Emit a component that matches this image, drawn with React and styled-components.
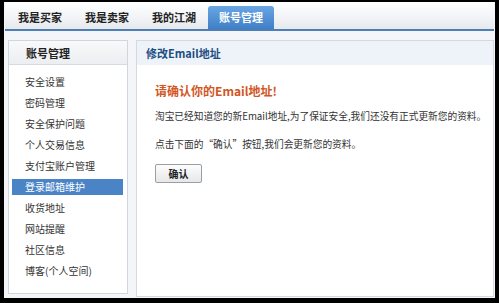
import styled, { createGlobalStyle } from "styled-components";

const GlobalStyle = createGlobalStyle`
  html, body {
    margin: 0;
    padding: 0;
    background: #000;
  }
  * {
    box-sizing: border-box;
  }
`;

const font = `"Noto Sans CJK SC", "Liberation Sans", sans-serif`;

const Frame = styled.div`
  width: 499px;
  height: 303px;
  padding: 2px 4px 5px 4px;
  background: #000;
`;

const Page = styled.div`
  width: 100%;
  height: 100%;
  background: #f3f5f8;
  font-family: ${font};
  display: flex;
  flex-direction: column;
`;

const TabBar = styled.div`
  height: 29px;
  display: flex;
  align-items: flex-end;
  gap: 1px;
  padding: 0 1px 0 2px;
  background: linear-gradient(180deg, #ffffff 0%, #f1f3f6 60%, #e6e9ed 100%);
  border-bottom: 2px solid #4e7fb4;
  margin: 0 1px;
`;

const Tab = styled.div`
  width: 66px;
  height: 23px;
  display: flex;
  align-items: center;
  justify-content: center;
  font-size: 11px;
  font-weight: 700;
  color: ${(p) => (p.active ? "#fff" : "#222")};
  border-radius: 3px 3px 0 0;
  background: ${(p) =>
    p.active ? "linear-gradient(180deg, #6aa6e4 0%, #3f7fc6 100%)" : "transparent"};
  padding-bottom: 1px;
`;

const Content = styled.div`
  flex: 1;
  display: flex;
  gap: 8px;
  padding: 9px 1px 0 4px;
`;

const Side = styled.div`
  flex: 0 0 120px;
  height: 254px;
  background: #fff;
  border: 1px solid #cfd6de;
  display: flex;
  flex-direction: column;
`;

const SideHead = styled.div`
  height: 24px;
  padding-left: 17px;
  display: flex;
  align-items: center;
  font-size: 11px;
  font-weight: 700;
  color: #222;
  background: linear-gradient(180deg, #f8f9fa 0%, #eceef1 100%);
  border-bottom: 1px solid #d6dbe1;
`;

const SideList = styled.div`
  padding: 9px 4px 0 3px;
  display: flex;
  flex-direction: column;
  gap: 5px;
`;

const SideItem = styled.div`
  height: 16px;
  line-height: 16px;
  padding-left: 13px;
  font-size: 10px;
  color: ${(p) => (p.active ? "#fff" : "#333")};
  background: ${(p) => (p.active ? "#4a84c7" : "transparent")};
  white-space: nowrap;
`;

const Main = styled.div`
  flex: 1;
  min-width: 0;
  height: 257px;
  background: #fff;
  border: 1px solid #d3dae2;
  display: flex;
  flex-direction: column;
`;

const MainHead = styled.div`
  height: 24px;
  padding-left: 9px;
  display: flex;
  align-items: center;
  font-size: 11px;
  font-weight: 700;
  color: #1c4f80;
  background: #eef3fa;
`;

const MainBody = styled.div`
  padding: 18px 0 0 18px;
  display: flex;
  flex-direction: column;
  align-items: flex-start;
`;

const Title = styled.div`
  font-size: 12px;
  line-height: 16px;
  font-weight: 700;
  color: #d1561f;
`;

const Para = styled.div`
  font-size: 9.7px;
  line-height: 16px;
  color: #333;
  white-space: nowrap;
  margin-top: ${(p) => p.gap}px;
`;

const Button = styled.button`
  margin-top: 12px;
  width: 47px;
  height: 19px;
  padding: 0;
  font-family: ${font};
  font-size: 10px;
  font-weight: 700;
  color: #222;
  border: 1px solid #9a9fa6;
  border-radius: 2px;
  background: linear-gradient(180deg, #fdfdfd 0%, #e6e7e9 100%);
`;

const tabs = ["我是买家", "我是卖家", "我的江湖", "账号管理"];
const menu = [
  "安全设置",
  "密码管理",
  "安全保护问题",
  "个人交易信息",
  "支付宝账户管理",
  "登录邮箱维护",
  "收货地址",
  "网站提醒",
  "社区信息",
  "博客(个人空间)",
];

export default function App() {
  return (
    <>
      <GlobalStyle />
      <Frame>
        <Page>
          <TabBar>
            {tabs.map((t) => (
              <Tab key={t} active={t === "账号管理"}>
                {t}
              </Tab>
            ))}
          </TabBar>
          <Content>
            <Side>
              <SideHead>账号管理</SideHead>
              <SideList>
                {menu.map((m) => (
                  <SideItem key={m} active={m === "登录邮箱维护"}>
                    {m}
                  </SideItem>
                ))}
              </SideList>
            </Side>
            <Main>
              <MainHead>修改Email地址</MainHead>
              <MainBody>
                <Title>请确认你的Email地址!</Title>
                <Para gap={9}>
                  淘宝已经知道您的新Email地址,为了保证安全,我们还没有正式更新您的资料。
                </Para>
                <Para gap={12}>点击下面的“确认”按钮,我们会更新您的资料。</Para>
                <Button>确认</Button>
              </MainBody>
            </Main>
          </Content>
        </Page>
      </Frame>
    </>
  );
}
